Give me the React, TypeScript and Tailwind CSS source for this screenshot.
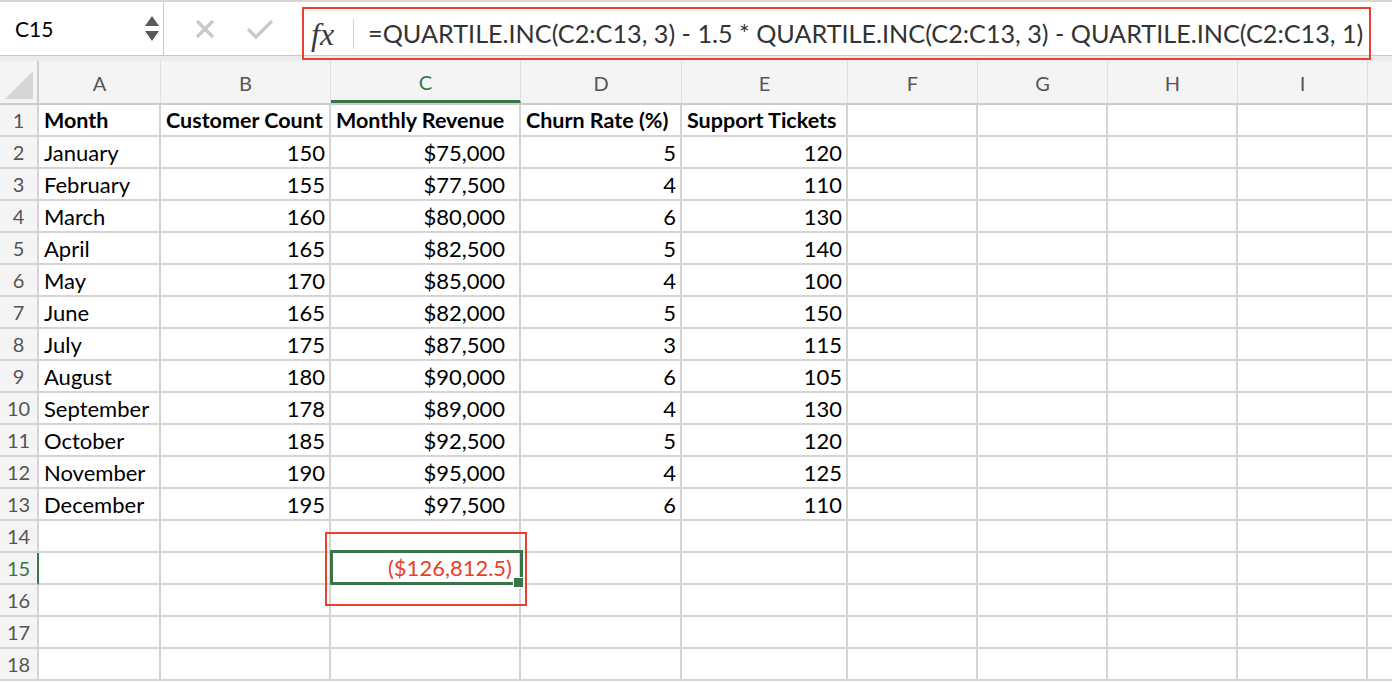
import React from "react";

const cols = [
  { k: "A", w: 122 },
  { k: "B", w: 170 },
  { k: "C", w: 190 },
  { k: "D", w: 161 },
  { k: "E", w: 166 },
  { k: "F", w: 130 },
  { k: "G", w: 130 },
  { k: "H", w: 130 },
  { k: "I", w: 130 },
  { k: "", w: 130 },
];

type Row = [string, string, string, string, string];

const header: Row = ["Month", "Customer Count", "Monthly Revenue", "Churn Rate (%)", "Support Tickets"];

const data: Row[] = [
  ["January", "150", "$75,000", "5", "120"],
  ["February", "155", "$77,500", "4", "110"],
  ["March", "160", "$80,000", "6", "130"],
  ["April", "165", "$82,500", "5", "140"],
  ["May", "170", "$85,000", "4", "100"],
  ["June", "165", "$82,000", "5", "150"],
  ["July", "175", "$87,500", "3", "115"],
  ["August", "180", "$90,000", "6", "105"],
  ["September", "178", "$89,000", "4", "130"],
  ["October", "185", "$92,500", "5", "120"],
  ["November", "190", "$95,000", "4", "125"],
  ["December", "195", "$97,500", "6", "110"],
];

const font = { fontFamily: "Lato, 'Open Sans', sans-serif" };

function FormulaBar() {
  return (
    <div className="flex h-[56px] border-t-2 border-b border-t-[#d9d6cf] border-b-[#c8c8c8] bg-white">
      <div className="flex w-[164px] shrink-0 items-center justify-between border-r border-[#c8c8c8] pl-[15px] pr-[4px]">
        <span className="text-[21px] text-black">C15</span>
        <div className="flex flex-col gap-[5px]">
          <svg width="14" height="10" viewBox="0 0 14 10">
            <polygon points="7,0 14,10 0,10" fill="#5a5a5a" />
          </svg>
          <svg width="14" height="10" viewBox="0 0 14 10">
            <polygon points="0,0 14,0 7,10" fill="#5a5a5a" />
          </svg>
        </div>
      </div>
      <div className="flex w-[138px] shrink-0 items-center gap-[30px] pl-[30px]">
        <svg width="22" height="22" viewBox="0 0 22 22">
          <path d="M3 3 L19 19 M19 3 L3 19" stroke="#c9c9c9" strokeWidth="3.2" fill="none" />
        </svg>
        <svg width="28" height="22" viewBox="0 0 28 22">
          <path d="M2 11 L10 19 L26 3" stroke="#c9c9c9" strokeWidth="3.2" fill="none" />
        </svg>
      </div>
      <div className="mt-[5px] mb-[-5px] flex w-[1069px] shrink-0 items-center border-2 border-[#e8402a] pl-[7px]">
        <span
          className="text-[32px] leading-none italic text-[#3a3a3a]"
          style={{ fontFamily: "'Liberation Serif', 'DejaVu Serif', serif" }}
        >
          fx
        </span>
        <span className="ml-[19px] h-[30px] w-px bg-[#d4d4d4]" />
        <span className="ml-[14px] whitespace-nowrap text-[25.2px] text-[#333]">
          =QUARTILE.INC(C2:C13, 3) - 1.5 * QUARTILE.INC(C2:C13, 3) - QUARTILE.INC(C2:C13, 1)
        </span>
      </div>
    </div>
  );
}

function ColumnHeader() {
  return (
    <div className="flex h-[44px] border-b-2 border-[#cdcdcd] bg-[#f4f4f4]">
      <div className="flex w-[39px] shrink-0 items-end justify-end border-r-2 border-[#cdcdcd] p-[4px]">
        <svg width="28" height="28" viewBox="0 0 28 28">
          <polygon points="28,0 28,28 0,28" fill="#d6d6d6" />
        </svg>
      </div>
      {cols.map((c, i) => (
        <div
          key={i}
          style={{ width: c.w }}
          className={`flex shrink-0 items-center justify-center border-r border-[#e0e0e0] pt-[2px] text-[20px] ${
            c.k === "C" ? "border-b-[3px] border-b-[#3a7449] text-[#3a7449]" : "text-[#555]"
          }`}
        >
          {c.k}
        </div>
      ))}
    </div>
  );
}

function GridRow({ n, cells, bold }: { n: number; cells: string[]; bold?: boolean }) {
  const active = n === 15;
  return (
    <div className="flex h-[32px]">
      <div
        className={`flex w-[39px] shrink-0 items-center justify-center border-r-2 border-b-2 bg-[#f4f4f4] text-[20px] ${
          active ? "border-r-[#3a7449] border-b-[#d4d4d4] text-[#3a7449]" : "border-[#d4d4d4] text-[#555]"
        }`}
      >
        {n}
      </div>
      {cols.map((c, i) => {
        const v = cells[i] ?? "";
        const right = !bold && i > 0 && i < 5;
        return (
          <div
            key={i}
            style={{ width: c.w }}
            className={`flex shrink-0 items-center overflow-visible whitespace-nowrap border-r-2 border-b-2 border-[#d4d4d4] pl-[5px] text-black ${
              right ? "justify-end" : "justify-start"
            } ${i === 2 && !bold ? "pr-[14px]" : "pr-[4px]"} ${bold ? "text-[21.5px] font-bold" : "text-[22px]"}`}
          >
            {v}
          </div>
        );
      })}
    </div>
  );
}

export default function App() {
  const rows: { n: number; cells: string[]; bold?: boolean }[] = [
    { n: 1, cells: header, bold: true },
    ...data.map((d, i) => ({ n: i + 2, cells: d })),
    { n: 14, cells: [] },
    { n: 15, cells: [] },
    { n: 16, cells: [] },
    { n: 17, cells: [] },
    { n: 18, cells: [] },
  ];
  return (
    <div className="relative h-[682px] w-[1392px] overflow-hidden bg-white" style={font}>
      <FormulaBar />
      <div className="h-[5px] bg-[#ececec]" />
      <ColumnHeader />
      {rows.map((r) => (
        <GridRow key={r.n} n={r.n} cells={r.cells} bold={r.bold} />
      ))}

      {/* selected cell C15 */}
      <div className="absolute left-[330px] top-[550px] flex h-[35px] w-[193px] items-center justify-end border-[3px] border-[#3a7449] pr-[8px] text-[22px] text-[#e8402a]">
        ($126,812.5)
      </div>
      <div className="absolute left-[513px] top-[577px] h-[11px] w-[11px] border border-white bg-[#3a7449]" />
      {/* annotation */}
      <div className="absolute left-[325px] top-[532px] h-[74px] w-[202px] border-2 border-[#e8402a]" />
    </div>
  );
}
